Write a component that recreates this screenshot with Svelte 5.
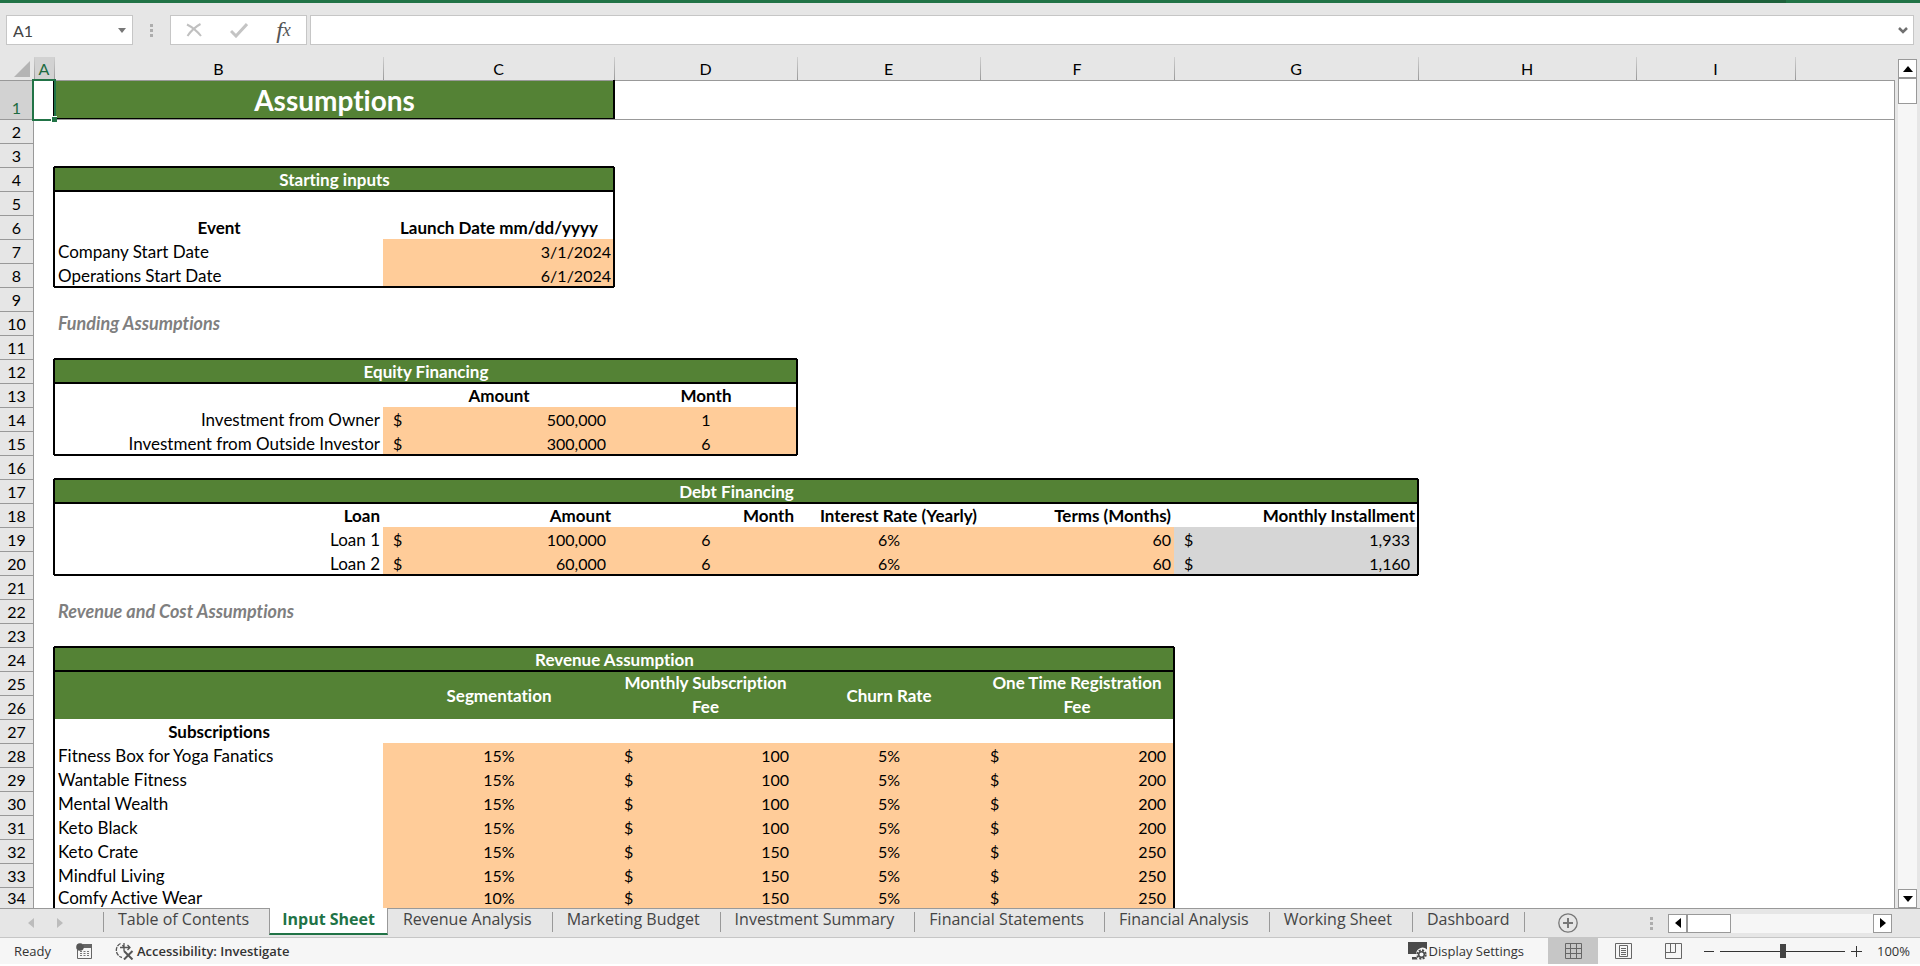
<script>
  let columns = [
    { name: "A", width: 20 },
    { name: "B", width: 329 },
    { name: "C", width: 231 },
    { name: "D", width: 183 },
    { name: "E", width: 183 },
    { name: "F", width: 194 },
    { name: "G", width: 244 },
    { name: "H", width: 218 },
    { name: "I", width: 159 },
  ];

  // Boxed ranges, [first row, last row, first column, last column]
  const boxes = [
    [1, 1, 1, 2],
    [4, 4, 1, 2],
    [5, 8, 1, 2],
    [12, 12, 1, 3],
    [13, 15, 1, 3],
    [17, 17, 1, 6],
    [18, 20, 1, 6],
    [24, 24, 1, 5],
    [25, 40, 1, 5],
  ];

  const plan = (label, fee, share, registration) => [
    { text: label },
    { text: share, style: "input center" },
    { money: fee, style: "input" },
    { text: "5%", style: "input center" },
    { money: registration, style: "input" },
  ];

  const investment = (label, amount, month) => [
    { text: label, style: "right" },
    { money: amount, style: "input" },
    { text: month, style: "input center" },
  ];

  const loan = (label, amount, installment) => [
    { text: label, style: "right" },
    { money: amount, style: "input" },
    { text: "6", style: "input center" },
    { text: "6%", style: "input center" },
    { text: "60", style: "input right" },
    { money: installment, style: "result" },
  ];

  // Cells of each row, starting at column B
  const content = {
    1: [{ text: "Assumptions", span: 2, style: "title" }],
    4: [{ text: "Starting inputs", span: 2, style: "band" }],
    6: [
      { text: "Event", style: "bold center" },
      { text: "Launch Date mm/dd/yyyy", style: "bold center" },
    ],
    7: [{ text: "Company Start Date" }, { text: "3/1/2024", style: "input right" }],
    8: [{ text: "Operations Start Date" }, { text: "6/1/2024", style: "input right" }],
    10: [{ text: "Funding Assumptions", style: "note" }],
    12: [{ text: "Equity Financing", span: 3, style: "band" }],
    13: [
      { text: "" },
      { text: "Amount", style: "bold center" },
      { text: "Month", style: "bold center" },
    ],
    14: investment("Investment from Owner", "500,000", "1"),
    15: investment("Investment from Outside Investor", "300,000", "6"),
    17: [{ text: "Debt Financing", span: 6, style: "band" }],
    18: [
      { text: "Loan", style: "bold right" },
      { text: "Amount", style: "bold right" },
      { text: "Month", style: "bold right" },
      { text: "Interest Rate (Yearly)", style: "bold right" },
      { text: "Terms (Months)", style: "bold right" },
      { text: "Monthly Installment", style: "bold right" },
    ],
    19: loan("Loan 1", "100,000", "1,933"),
    20: loan("Loan 2", "60,000", "1,160"),
    22: [{ text: "Revenue and Cost Assumptions", style: "note" }],
    24: [{ text: "Revenue Assumption", span: 5, style: "band" }],
    25: [
      { text: "", down: 2, style: "band" },
      { text: "Segmentation", down: 2, style: "band" },
      { text: "Monthly Subscription Fee", down: 2, style: "band wrap" },
      { text: "Churn Rate", down: 2, style: "band" },
      { text: "One Time Registration Fee", down: 2, style: "band wrap" },
    ],
    27: [{ text: "Subscriptions", style: "bold center" }],
    28: plan("Fitness Box for Yoga Fanatics", "100", "15%", "200"),
    29: plan("Wantable Fitness", "100", "15%", "200"),
    30: plan("Mental Wealth", "100", "15%", "200"),
    31: plan("Keto Black", "100", "15%", "200"),
    32: plan("Keto Crate", "150", "15%", "250"),
    33: plan("Mindful Living", "150", "15%", "250"),
    34: plan("Comfy Active Wear", "150", "10%", "250"),
  };

  function edges(row, lastRow, col, lastCol) {
    let list = [];
    for (const [r1, r2, c1, c2] of boxes) {
      const inRows = row >= r1 && row <= r2;
      const inCols = col >= c1 && col <= c2;
      if (inCols && (row === r1 || row === r2 + 1)) list.push("edge-top");
      if (inCols && (lastRow === r2 || lastRow === r1 - 1)) list.push("edge-bottom");
      if (inRows && (col === c1 || col === c2 + 1)) list.push("edge-left");
      if (inRows && (lastCol === c2 || lastCol === c1 - 1)) list.push("edge-right");
    }
    return list.join(" ");
  }

  function buildRow(number) {
    const cells = [];
    let col = 0;
    const add = (cell) => {
      const span = cell.span || 1;
      const down = cell.down || 1;
      cells.push({
        ...cell,
        span,
        down,
        col,
        css: `${cell.style || ""} ${edges(number, number + down - 1, col, col + span - 1)}`,
      });
      col += span;
    };
    add({ text: "" });
    // the merged headings of row 25 also cover row 26
    if (number === 26) col = 6;
    (content[number] || []).forEach(add);
    while (col <= columns.length) add({ text: "" });
    return { number, cells };
  }

  const rows = Array.from({ length: 34 }, (_, i) => buildRow(i + 1));

  const tabs = [
    "Table of Contents",
    "Input Sheet",
    "Revenue Analysis",
    "Marketing Budget",
    "Investment Summary",
    "Financial Statements",
    "Financial Analysis",
    "Working Sheet",
    "Dashboard",
  ];
  let activeTab = "Input Sheet";
  let cellName = "A1";
  let formula = "";
  let zoom = 100;
</script>

<div class="app">
  <div class="ribbon-edge"></div>

  <div class="formula-bar">
    <div class="name-box">
      <input type="text" aria-label="Name Box" bind:value={cellName} />
      <button aria-label="Show names">
        <svg width="8" height="5" viewBox="0 0 8 5"><path d="M0 0h8L4 5z" fill="#777" /></svg>
      </button>
    </div>
    <svg class="grip" width="3" height="13" viewBox="0 0 3 13"><path d="M0 0h3v3H0zM0 5h3v3H0zM0 10h3v3H0z" fill="#adadad" /></svg>
    <div class="formula-tools">
      <button aria-label="Cancel">
        <svg width="16" height="14" viewBox="0 0 16 14"><path d="M1 1.500C6 4 11 8 15 13M14.500 1C9 4 4.500 8.500 1.500 13" fill="none" stroke="#c0c0c0" stroke-width="2" /></svg>
      </button>
      <button aria-label="Enter">
        <svg width="18" height="15" viewBox="0 0 18 15"><path d="M1 8l5 5L17 1" fill="none" stroke="#c4c4c4" stroke-width="3" /></svg>
      </button>
      <button class="fx" aria-label="Insert Function">f<span>x</span></button>
    </div>
    <div class="formula-box">
      <input type="text" aria-label="Formula Bar" bind:value={formula} />
      <button aria-label="Expand Formula Bar">
        <svg width="10" height="7" viewBox="0 0 10 7"><path d="M1 1l4 4 4-4" fill="none" stroke="#707070" stroke-width="2.500" /></svg>
      </button>
    </div>
  </div>

  <div class="workspace">
    <div class="sheet">
      <table>
        <colgroup>
          <col style="width: 34px" />
          {#each columns as column}
            <col style="width: {column.width}px" />
          {/each}
          <col />
        </colgroup>
        <thead>
          <tr>
            <th class="corner">
              <svg width="16" height="16" viewBox="0 0 16 16"><path d="M16 0v16H0z" fill="#b4b4b4" /></svg>
            </th>
            {#each columns as column}
              <th scope="col" class:selected={column.name === "A"}>{column.name}</th>
            {/each}
            <th></th>
          </tr>
        </thead>
        <tbody>
          {#each rows as row}
            <tr class:frozen={row.number === 1} class:unfrozen={row.number === 2}>
              <th scope="row" class:selected={row.number === 1}>{row.number}</th>
              {#each row.cells as cell}
                <td class={cell.css} colspan={cell.span} rowspan={cell.down}>
                  {#if cell.money}
                    <div class="money"><span>$</span><span>{cell.money}</span></div>
                  {:else}
                    {cell.text}
                  {/if}
                  {#if row.number === 1 && cell.col === 0}
                    <div class="cursor"></div>
                  {/if}
                </td>
              {/each}
            </tr>
          {/each}
        </tbody>
      </table>
    </div>

    <div class="scroll vertical">
      <button aria-label="Scroll up">
        <svg width="10" height="6" viewBox="0 0 10 6"><path d="M0 6l5-6 5 6z" /></svg>
      </button>
      <div class="thumb"></div>
      <div class="track"></div>
      <button aria-label="Scroll down">
        <svg width="10" height="6" viewBox="0 0 10 6"><path d="M0 0l5 6 5-6z" /></svg>
      </button>
    </div>
  </div>

  <div class="tab-bar">
    <div class="tab-nav">
      <button aria-label="Previous sheet">
        <svg width="6" height="10" viewBox="0 0 6 10"><path d="M6 0v10L0 5z" fill="#bcbcbc" /></svg>
      </button>
      <button aria-label="Next sheet">
        <svg width="6" height="10" viewBox="0 0 6 10"><path d="M0 0v10l6-5z" fill="#bcbcbc" /></svg>
      </button>
    </div>
    <div class="tabs">
      {#each tabs as tab}
        <button class="tab" class:active={tab === activeTab} on:click={() => (activeTab = tab)}>{tab}</button>
      {/each}
    </div>
    <button class="new-sheet" aria-label="New sheet">
      <svg width="20" height="20" viewBox="0 0 20 20"><circle cx="10" cy="10" r="9.200" fill="none" stroke="#777" stroke-width="1.300" /><path d="M10 5v10M5 10h10" stroke="#777" stroke-width="2" /></svg>
    </button>
    <svg class="grip" width="3" height="13" viewBox="0 0 3 13"><path d="M0 0h3v3H0zM0 5h3v3H0zM0 10h3v3H0z" fill="#adadad" /></svg>
    <div class="scroll horizontal">
      <button aria-label="Scroll left">
        <svg width="6" height="10" viewBox="0 0 6 10"><path d="M6 0v10L0 5z" /></svg>
      </button>
      <div class="thumb"></div>
      <div class="track"></div>
      <button aria-label="Scroll right">
        <svg width="6" height="10" viewBox="0 0 6 10"><path d="M0 0v10l6-5z" /></svg>
      </button>
    </div>
  </div>

  <div class="status-bar">
    <span class="ready">Ready</span>
    <button class="macro" aria-label="Record macro">
      <svg width="16" height="16" viewBox="0 0 16 16"><path d="M1.500 7v8.500h14V2" fill="none" stroke="#666" /><path d="M7 1h9v4H7z" fill="#666" /><circle cx="4" cy="4" r="3.800" fill="#555" /><path d="M4 8.500h2M7.500 8.500h2M11 8.500h2M4 10.500h2M7.500 10.500h2M11 10.500h2M4 12.500h2M7.500 12.500h2M11 12.500h2" stroke="#777" /></svg>
    </button>
    <button class="accessibility">
      <svg width="20" height="18" viewBox="0 0 20 18"><path d="M6.500 1.500a7.500 7.500 0 0 0 1.500 14" fill="none" stroke="#555" stroke-width="1.300" stroke-dasharray="4 1" /><path d="M6 5.500h10M10 1v8M8.500 3L10 5.500M13.500 3L16 5.500 13.500 8" fill="none" stroke="#555" stroke-width="1.300" /><path d="M10 9l8.500 8.500M18.500 9L10 17.500" stroke="#555" stroke-width="2" /></svg>
      Accessibility: Investigate
    </button>
    <button class="display">
      <svg width="19" height="18" viewBox="0 0 19 18"><path d="M0 0h19v7.500A6.500 6.500 0 0 0 8 12H0zM4 15h4.500l1 2.500H4z" fill="#4a4a4a" /><circle cx="13.500" cy="12.500" r="4.200" fill="none" stroke="#4a4a4a" stroke-width="2" stroke-dasharray="2 1.300" /><circle cx="13.500" cy="12.500" r="2.800" fill="none" stroke="#4a4a4a" stroke-width="1.500" /></svg>
      Display Settings
    </button>
    <button class="view active" aria-label="Normal">
      <svg width="17" height="16" viewBox="0 0 17 16"><path d="M.5.5h16v15H.5zM5.500.5v15M11.500.5v15M.5 5.500h16M.5 10.500h16" fill="none" stroke="#666" /></svg>
    </button>
    <button class="view" aria-label="Page Layout">
      <svg width="17" height="16" viewBox="0 0 17 16"><path d="M.5.5h16v15H.5zM4.500 2.500h8v11h-8zM6 5.500h5M6 7.500h5M6 9.500h5M6 11.500h5" fill="none" stroke="#666" /></svg>
    </button>
    <button class="view" aria-label="Page Break Preview">
      <svg width="17" height="16" viewBox="0 0 17 16"><path d="M.5.5h16v15H.5zM5.500.5v9M.5 9.500h10V.5" fill="none" stroke="#666" /></svg>
    </button>
    <button class="step" aria-label="Zoom out">
      <svg width="10" height="10" viewBox="0 0 10 10"><path d="M0 5.500h10" stroke="#333" /></svg>
    </button>
    <input class="zoom" type="range" min="10" max="190" aria-label="Zoom" bind:value={zoom} />
    <button class="step" aria-label="Zoom in">
      <svg width="11" height="11" viewBox="0 0 11 11"><path d="M0 5.500h11M5.500 0v11" stroke="#333" /></svg>
    </button>
    <span class="percent">{zoom}%</span>
  </div>
</div>

<style>
  :global(body) {
    margin: 0;
    background: #fff;
  }

  .app {
    display: flex;
    flex-direction: column;
    height: 100vh;
    padding-bottom: 2px;
    box-sizing: border-box;
    overflow: hidden;
    background: #e6e6e6;
    background-clip: content-box;
    color: #000;
    font-family: Lato, sans-serif;
    font-size: 16px;
  }

  button {
    display: flex;
    align-items: center;
    justify-content: center;
    padding: 0;
    border: none;
    background: none;
    color: inherit;
    font: inherit;
  }

  .ribbon-edge {
    flex: none;
    height: 3px;
    background: linear-gradient(90deg, transparent 88%, #1e613b 88%, #1e613b 93%, transparent 93%), #217346;
  }

  /* Formula bar */
  .formula-bar {
    display: flex;
    flex: none;
    align-items: center;
    height: 30px;
    padding: 12px 6px;
  }

  .formula-bar input {
    flex: 1;
    min-width: 0;
    padding: 0 6px;
    border: none;
    outline: none;
    background: none;
    color: #444;
    font: inherit;
  }

  .name-box,
  .formula-tools,
  .formula-box {
    display: flex;
    height: 30px;
    box-sizing: border-box;
    border: 1px solid #c6c6c6;
    background: #fff;
  }

  .name-box {
    width: 127px;
  }

  .name-box button {
    width: 20px;
  }

  .formula-bar .grip {
    margin: 0 17px;
  }

  .formula-tools {
    width: 137px;
    margin-right: 3px;
  }

  .formula-tools button {
    flex: 1;
  }

  .formula-tools .fx {
    color: #555;
    font-family: "Liberation Serif", serif;
    font-size: 24px;
    font-style: italic;
    line-height: 24px;
  }

  .fx span {
    font-size: 18px;
  }

  .formula-box {
    flex: 1;
  }

  .formula-box button {
    width: 20px;
  }

  /* Sheet */
  .workspace {
    display: flex;
    flex: 1;
    min-height: 0;
  }

  .sheet {
    flex: 1;
    min-width: 0;
    overflow: hidden;
  }

  table {
    width: 100%;
    table-layout: fixed;
    border-collapse: separate;
    border-spacing: 0;
    font-variant-ligatures: none;
  }

  th {
    box-sizing: border-box;
    height: 24px;
    padding: 0;
    border-top: 1px solid #999;
    border-right: 1px solid #999;
    background: #e6e6e6;
    font-weight: normal;
    line-height: 23px;
    text-align: center;
    vertical-align: bottom;
  }

  thead th {
    height: 23px;
    border: none;
    background: linear-gradient(#d0d0d0, #999) left / 1px 100% no-repeat #e6e6e6;
  }

  thead .corner {
    padding-right: 4px;
    background: #e6e6e6;
    line-height: 1px;
    text-align: right;
    vertical-align: middle;
  }

  th.selected {
    background-color: #d2d2d2;
    color: #1e6b41;
  }

  /* Cell lines are inset shadows, so that they meet without mitred corners */
  td {
    --top: transparent;
    --right: transparent;
    --bottom: transparent;
    --left: transparent;
    box-sizing: border-box;
    height: 24px;
    padding: 1px 3px 0 4px;
    overflow: hidden;
    background: #fff;
    box-shadow:
      inset 1px 0 var(--left),
      inset -1px 0 var(--right),
      inset 0 1px var(--top),
      inset 0 -1px var(--bottom);
    font-size: 17px;
    line-height: 23px;
    white-space: nowrap;
  }

  td:last-child {
    --right: #999;
  }

  .frozen td {
    position: relative;
    height: 39px;
    overflow: visible;
  }

  tbody tr:last-child th,
  tbody tr:last-child td {
    height: 21px;
    line-height: 20px;
  }

  .cursor {
    position: absolute;
    inset: -1px -2px -2px -2px;
    z-index: 1;
    border: 2px solid #217346;
  }

  .cursor::after {
    position: absolute;
    right: -3px;
    bottom: -3px;
    width: 5px;
    height: 5px;
    border-top: 1px solid #fff;
    border-left: 1px solid #fff;
    background: #217346;
    content: "";
  }

  .right {
    text-align: right;
  }

  .center {
    text-align: center;
  }

  .bold {
    font-weight: bold;
  }

  .note {
    color: #7f7f7f;
    font-size: 18px;
    font-style: italic;
    font-weight: bold;
  }

  .title,
  .band {
    background: #548235;
    color: #fff;
    font-weight: bold;
    text-align: center;
  }

  .title {
    font-size: 28px;
  }

  .wrap {
    padding: 0 7px;
    line-height: 24px;
    white-space: normal;
  }

  .input {
    background: #ffcc99;
    font-size: 16px;
  }

  .result {
    background: #d6d6d6;
    font-size: 16px;
  }

  .money {
    display: flex;
    justify-content: space-between;
    padding: 0 5px 0 6px;
  }

  .edge-top {
    --top: #000;
  }

  .edge-bottom {
    --bottom: #000;
  }

  .edge-left {
    --left: #000;
  }

  .edge-right {
    --right: #000;
  }

  .frozen td,
  .unfrozen td {
    --top: #999;
  }

  /* Scroll bars */
  .scroll {
    display: flex;
    flex: none;
  }

  .scroll button,
  .thumb {
    flex: none;
    box-sizing: border-box;
    width: 19px;
    height: 19px;
    border: 1px solid #999;
    background: #fff;
  }

  .track {
    flex: 1;
    background: #f6f6f6;
  }

  .vertical {
    flex-direction: column;
    padding: 2px 3px 0;
  }

  .vertical .thumb {
    height: 26px;
  }

  .horizontal {
    width: 224px;
    margin-right: 28px;
  }

  .horizontal .thumb {
    width: 44px;
  }

  /* Sheet tabs */
  .tab-bar {
    display: flex;
    flex: none;
    align-items: center;
    height: 28px;
    border-top: 1px solid #999;
    border-bottom: 1px solid #c6c6c6;
    color: #444;
    font-family: "Open Sans", sans-serif;
  }

  .tab-nav {
    display: flex;
    flex: none;
    gap: 23px;
    width: 75px;
    padding-left: 28px;
  }

  .tabs {
    display: flex;
    align-self: stretch;
  }

  .tab {
    align-items: flex-start;
    height: 25px;
    padding: 0 20px 0 15px;
    line-height: 20px;
    white-space: nowrap;
    background: linear-gradient(#999, #999) left 3px / 1px 20px no-repeat;
  }

  .tab.active {
    height: 27px;
    margin-top: -1px;
    padding: 1px 12px 0;
    box-sizing: border-box;
    border-right: 1px solid #999;
    border-bottom: 2px solid #217346;
    border-left: 1px solid #999;
    background: #fff;
    color: #217346;
    font-weight: bold;
  }

  .tab.active + .tab {
    background: none;
  }

  .tab:last-child {
    padding-right: 15px;
    background:
      linear-gradient(#999, #999) left 3px / 1px 20px no-repeat,
      linear-gradient(#999, #999) right 3px / 1px 20px no-repeat;
  }

  .new-sheet {
    margin-left: 33px;
  }

  .tab-bar .grip {
    margin: 0 15px 0 auto;
  }

  /* Status bar */
  .status-bar {
    display: flex;
    flex: none;
    align-items: center;
    height: 26px;
    background: #f6f6f6;
    color: #333;
    font-family: "Open Sans", sans-serif;
    font-size: 13px;
  }

  .ready {
    width: 62px;
    padding-left: 14px;
  }

  .accessibility {
    gap: 3px;
    margin-left: 22px;
    font-weight: 600;
  }

  .display {
    gap: 2px;
    margin: 0 24px 0 auto;
  }

  .view {
    width: 50px;
    height: 26px;
  }

  .view.active {
    background: #c6c6c6;
  }

  .step {
    width: 22px;
  }

  .zoom {
    width: 125px;
    height: 16px;
    margin: 0;
    appearance: none;
    background: linear-gradient(#333, #333) center / 100% 1px no-repeat;
  }

  .zoom::-webkit-slider-thumb {
    width: 6px;
    height: 14px;
    appearance: none;
    background: #444;
  }

  .percent {
    width: 43px;
    padding-right: 10px;
    text-align: right;
  }
</style>
